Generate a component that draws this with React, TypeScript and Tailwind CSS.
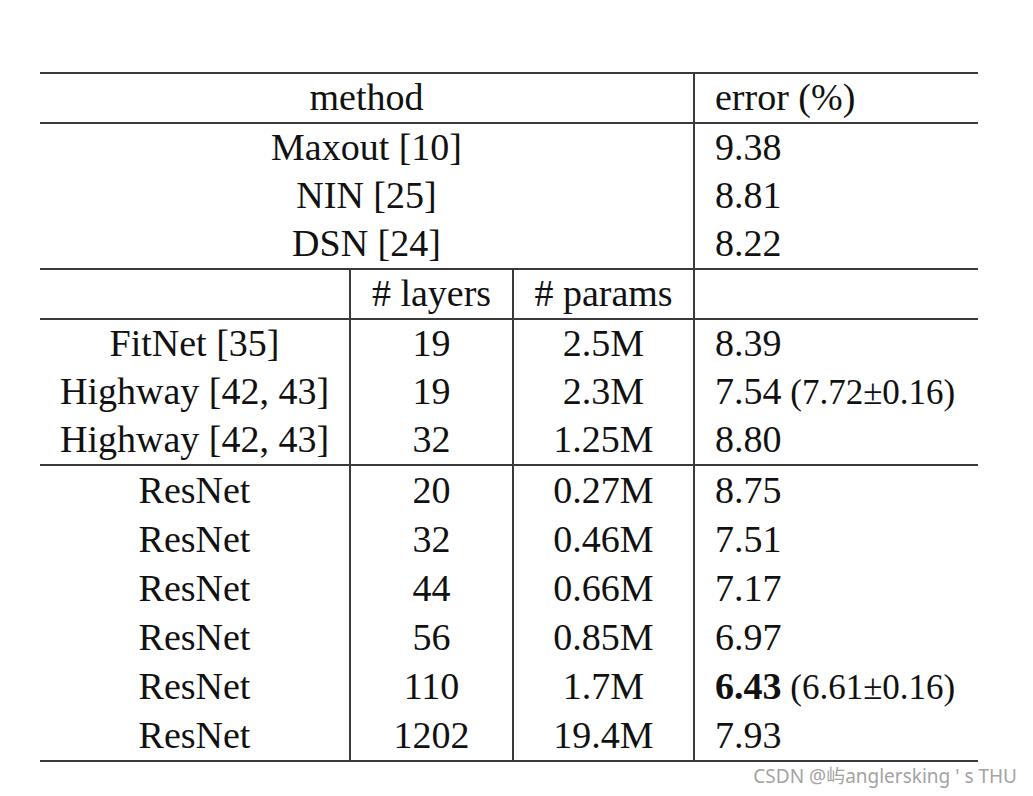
const serif = { fontFamily: '"Liberation Serif", "Times New Roman", serif' };

type Row = { name: string; layers: string; params: string; err: string; extra?: string; bold?: boolean };

const baselines = [
  { name: 'Maxout [10]', err: '9.38' },
  { name: 'NIN [25]', err: '8.81' },
  { name: 'DSN [24]', err: '8.22' },
];

const others: Row[] = [
  { name: 'FitNet [35]', layers: '19', params: '2.5M', err: '8.39' },
  { name: 'Highway [42, 43]', layers: '19', params: '2.3M', err: '7.54', extra: '(7.72\u00b10.16)' },
  { name: 'Highway [42, 43]', layers: '32', params: '1.25M', err: '8.80' },
];

const resnets: Row[] = [
  { name: 'ResNet', layers: '20', params: '0.27M', err: '8.75' },
  { name: 'ResNet', layers: '32', params: '0.46M', err: '7.51' },
  { name: 'ResNet', layers: '44', params: '0.66M', err: '7.17' },
  { name: 'ResNet', layers: '56', params: '0.85M', err: '6.97' },
  { name: 'ResNet', layers: '110', params: '1.7M', err: '6.43', extra: '(6.61\u00b10.16)', bold: true },
  { name: 'ResNet', layers: '1202', params: '19.4M', err: '7.93' },
];

function Line() {
  return <div className="h-[2px] bg-[#3a3a3a]" />;
}

function ErrCell({ err, extra, bold }: { err: string; extra?: string; bold?: boolean }) {
  return (
    <div className="border-l-2 border-[#3a3a3a] pl-[20px] whitespace-nowrap">
      <span className={bold ? 'font-bold' : ''}>{err}</span>
      {extra && <span className="text-[35px]"> {extra}</span>}
    </div>
  );
}

function DataRow({ r, h }: { r: Row; h: string }) {
  return (
    <div className={`grid grid-cols-[309px_163px_181px_285px] ${h}`}>
      <div className="text-center">{r.name}</div>
      <div className="border-l-2 border-[#3a3a3a] text-center">{r.layers}</div>
      <div className="border-l-2 border-[#3a3a3a] text-center">{r.params}</div>
      <ErrCell err={r.err} extra={r.extra} bold={r.bold} />
    </div>
  );
}

export default function App() {
  return (
    <div className="relative w-[1033px] h-[796px] bg-white overflow-hidden">
      <div className="pt-[72px] pl-[40px]">
        <div className="w-[938px] text-[38px] leading-[47px] text-[#111]" style={serif}>
          <Line />
          <div className="grid grid-cols-[653px_285px] h-[48px]">
            <div className="text-center">method</div>
            <div className="border-l-2 border-[#3a3a3a] pl-[20px]">error (%)</div>
          </div>
          <Line />
          {baselines.map((b) => (
            <div key={b.name} className="grid grid-cols-[653px_285px] h-[48px]">
              <div className="text-center">{b.name}</div>
              <ErrCell err={b.err} />
            </div>
          ))}
          <Line />
          <div className="grid grid-cols-[309px_163px_181px_285px] h-[48px]">
            <div />
            <div className="border-l-2 border-[#3a3a3a] text-center"># layers</div>
            <div className="border-l-2 border-[#3a3a3a] text-center"># params</div>
            <div className="border-l-2 border-[#3a3a3a]" />
          </div>
          <Line />
          {others.map((r, i) => (
            <DataRow key={i} r={r} h="h-[48px]" />
          ))}
          <Line />
          {resnets.map((r, i) => (
            <DataRow key={i} r={r} h="h-[49px] leading-[48px]" />
          ))}
          <Line />
        </div>
      </div>
      <div
        className="absolute right-[16px] bottom-[6px] text-[19px] text-[#a3a3a3] whitespace-pre"
        style={{ fontFamily: '"Noto Sans", "Noto Sans CJK SC", sans-serif' }}
      >
        CSDN @屿anglersking ' s THU
      </div>
    </div>
  );
}
